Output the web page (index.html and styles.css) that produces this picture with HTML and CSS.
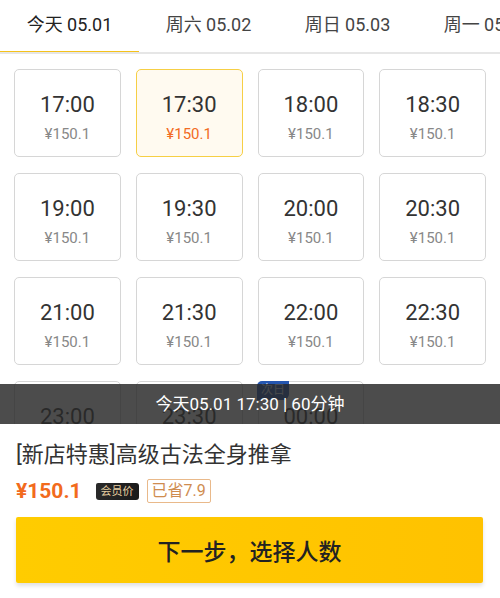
FILE: index.html
```html
<!DOCTYPE html>
<html lang="zh">
<head>
<meta charset="utf-8">
<title>选择时间</title>
<link rel="stylesheet" href="styles.css">
</head>
<body>
<div class="page">
  <nav class="tabs">
    <div class="tab active">今天 05.01</div>
    <div class="tab">周六 05.02</div>
    <div class="tab">周日 05.03</div>
    <div class="tab">周一 05.04</div>
  </nav>
  <section class="slots">
    <div class="grid">
      <div class="slot"><div class="time">17:00</div><div class="price">¥150.1</div></div>
      <div class="slot selected"><div class="time">17:30</div><div class="price">¥150.1</div></div>
      <div class="slot"><div class="time">18:00</div><div class="price">¥150.1</div></div>
      <div class="slot"><div class="time">18:30</div><div class="price">¥150.1</div></div>
      <div class="slot"><div class="time">19:00</div><div class="price">¥150.1</div></div>
      <div class="slot"><div class="time">19:30</div><div class="price">¥150.1</div></div>
      <div class="slot"><div class="time">20:00</div><div class="price">¥150.1</div></div>
      <div class="slot"><div class="time">20:30</div><div class="price">¥150.1</div></div>
      <div class="slot"><div class="time">21:00</div><div class="price">¥150.1</div></div>
      <div class="slot"><div class="time">21:30</div><div class="price">¥150.1</div></div>
      <div class="slot"><div class="time">22:00</div><div class="price">¥150.1</div></div>
      <div class="slot"><div class="time">22:30</div><div class="price">¥150.1</div></div>
      <div class="slot"><div class="time">23:00</div><div class="price">¥150.1</div></div>
      <div class="slot"><div class="time">23:30</div><div class="price">¥150.1</div></div>
      <div class="slot"><span class="badge">次日</span><div class="time">00:00</div><div class="price">¥150.1</div></div>
    </div>
    <div class="summary">今天05.01 17:30 | 60分钟</div>
  </section>
  <section class="panel">
    <h1 class="title">[新店特惠]高级古法全身推拿</h1>
    <div class="price-row">
      <span class="big-price">¥150.1</span>
      <span class="vip">会员价</span>
      <span class="save">已省7.9</span>
    </div>
    <button class="next">下一步，选择人数</button>
  </section>
</div>
</body>
</html>
```

FILE: styles.css
```css
* { box-sizing: border-box; }
html, body { margin: 0; padding: 0; background: #fff; }
body {
  font-family: "Roboto", "Noto Sans CJK SC", sans-serif;
  color: #333;
}
.page { width: 500px; height: 598px; overflow: hidden; display: flex; flex-direction: column; }

.tabs {
  display: flex;
  height: 54px;
  border-bottom: 2px solid #e6e6e6;
  overflow: hidden;
  flex-shrink: 0;
}
.tab {
  flex: 0 0 139px;
  text-align: center;
  font-size: 18px;
  line-height: 49px;
  color: #444;
  white-space: nowrap;
  border-bottom: 3px solid transparent;
  margin-bottom: -2px;
}
.tab.active { color: #222; border-bottom-color: #f5c21b; }

.slots {
  position: relative;
  height: 370px;
  overflow: hidden;
  flex-shrink: 0;
}
.grid {
  display: grid;
  grid-template-columns: repeat(4, 1fr);
  column-gap: 15px;
  row-gap: 16px;
  padding: 15px 14px 0;
}
.slot {
  position: relative;
  height: 88px;
  border: 1.5px solid #d6d6d6;
  border-radius: 5px;
  display: flex;
  flex-direction: column;
  align-items: center;
  padding-top: 20px;
}
.time { font-size: 22px; line-height: 30px; color: #333; }
.price { font-size: 15px; line-height: 20px; color: #888; margin-top: 4px; }
.slot.selected { border-color: #f6cf45; background: #fffaf0; }
.slot.selected .price { color: #f26b24; }

.badge {
  position: absolute;
  top: -1.5px;
  left: -1.5px;
  width: 32px;
  height: 19px;
  background: #2556b0;
  color: #dfe7f7;
  font-size: 12px;
  line-height: 19px;
  text-align: center;
  border-radius: 5px 0 6px 0;
}

.summary {
  position: absolute;
  left: 0;
  right: 0;
  bottom: 0;
  height: 40px;
  background: rgba(40, 40, 40, 0.83);
  color: #fff;
  font-size: 17px;
  line-height: 40px;
  text-align: center;
}

.panel { padding: 16px 16px 0; }
.title {
  margin: 0;
  font-size: 22px;
  font-weight: 400;
  line-height: 30px;
  color: #333;
}
.price-row {
  display: flex;
  align-items: center;
  margin-top: 8px;
  height: 26px;
}
.big-price {
  font-size: 21px;
  font-weight: 700;
  color: #f26b1d;
  margin-right: 14px;
}
.vip {
  position: relative;
  background: linear-gradient(90deg, #2a2a2a, #1a1a1a);
  color: #e8cfa0;
  font-size: 11px;
  line-height: 17px;
  padding: 0 5px;
  border-radius: 2px 3px 3px 3px;
  margin-right: 8px;
}
.save {
  border: 1px solid #e9b98a;
  color: #cf8c4f;
  font-size: 16px;
  line-height: 22px;
  padding: 0 4px;
  border-radius: 2px;
}
.next {
  display: block;
  width: 467px;
  height: 66px;
  margin-top: 13px;
  border: none;
  border-radius: 2px;
  background: linear-gradient(90deg, #ffcc00, #ffc200);
  box-shadow: 0 3px 4px rgba(0, 0, 0, 0.12);
  font-family: inherit;
  font-size: 23px;
  font-weight: 500;
  color: #222;
}
```
